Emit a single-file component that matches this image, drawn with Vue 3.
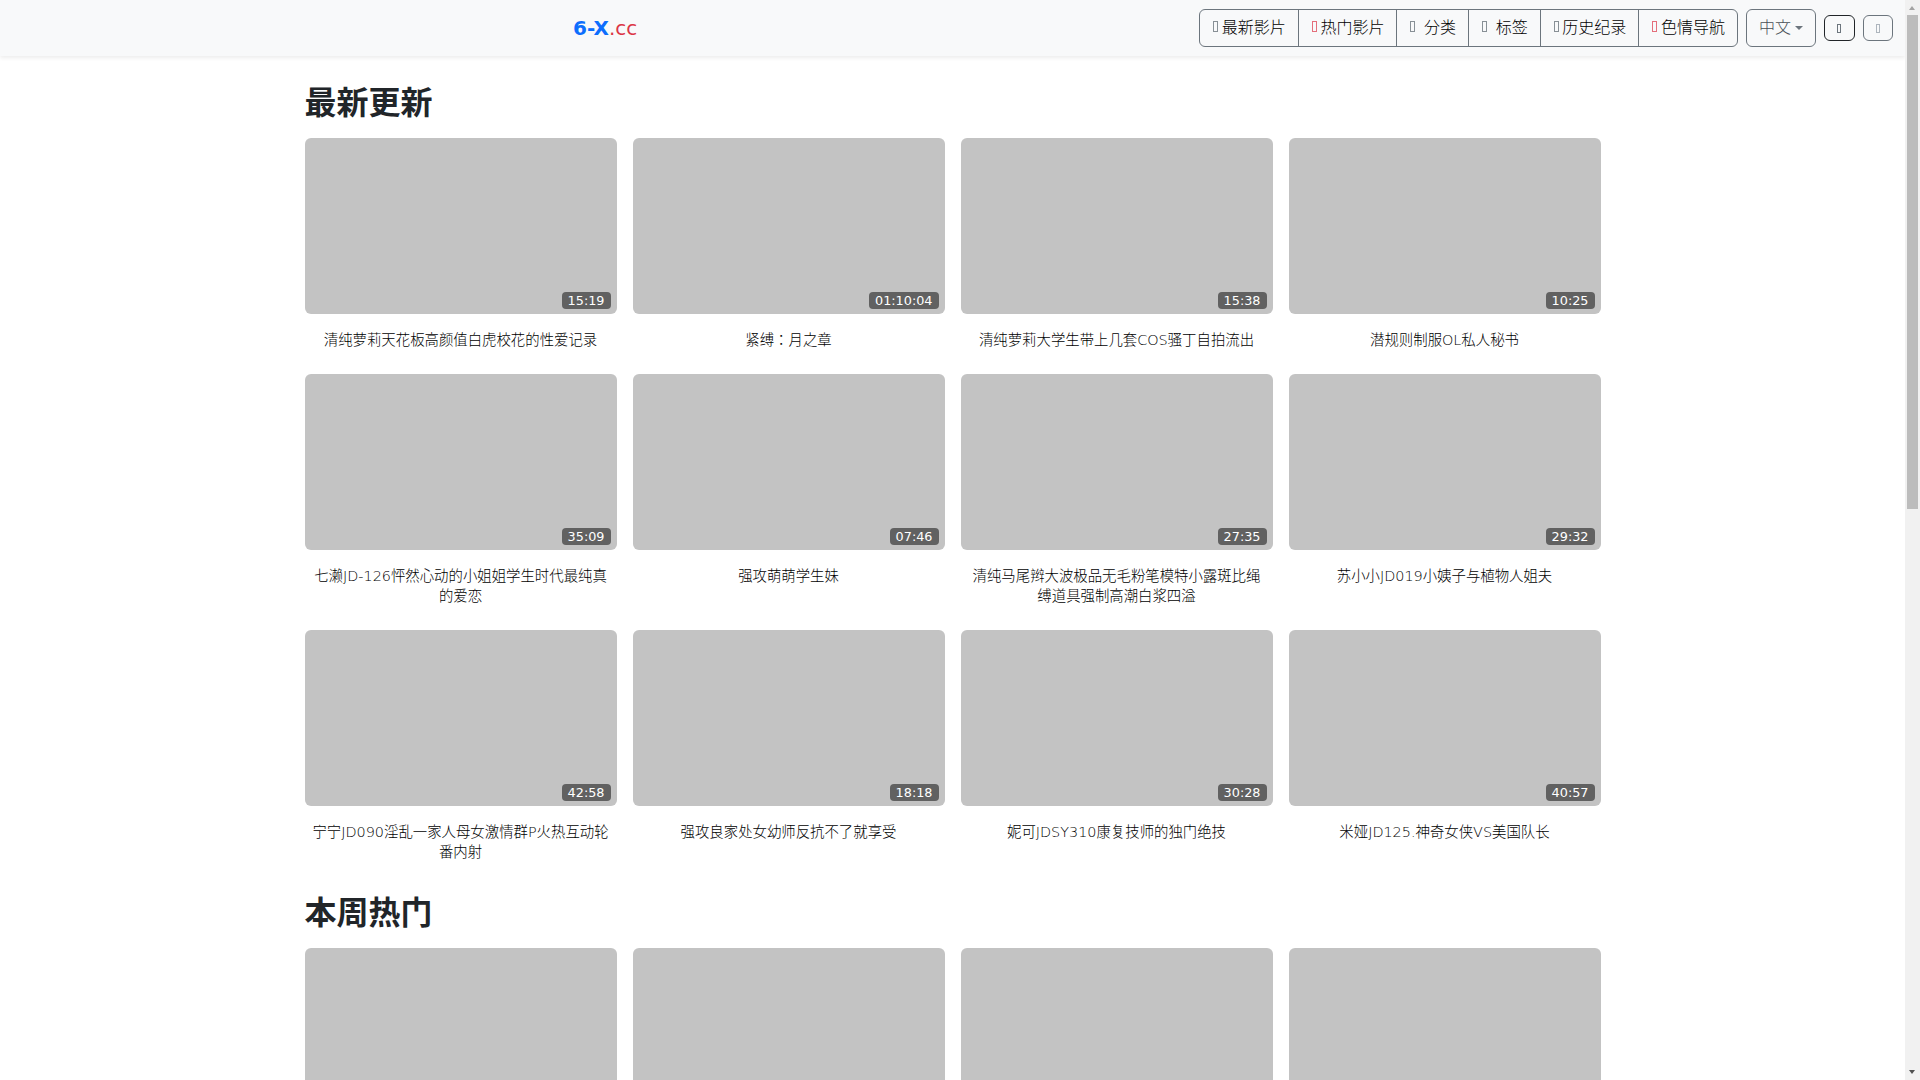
<script setup>
const navItems = [
  { label: '最新影片', hot: false },
  { label: '热门影片', hot: true },
  { label: ' 分类', hot: false },
  { label: ' 标签', hot: false },
  { label: '历史纪录', hot: false },
  { label: '色情导航', hot: true }
]
const latest = [
  ['15:19', '清纯萝莉天花板高颜值白虎校花的性爱记录'],
  ['01:10:04', '紧缚：月之章'],
  ['15:38', '清纯萝莉大学生带上几套COS骚丁自拍流出'],
  ['10:25', '潜规则制服OL私人秘书'],
  ['35:09', '七濑JD-126怦然心动的小姐姐学生时代最纯真的爱恋'],
  ['07:46', '强攻萌萌学生妹'],
  ['27:35', '清纯马尾辫大波极品无毛粉笔模特小露斑比绳缚道具强制高潮白浆四溢'],
  ['29:32', '苏小小JD019小姨子与植物人姐夫'],
  ['42:58', '宁宁JD090淫乱一家人母女激情群P火热互动轮番内射'],
  ['18:18', '强攻良家处女幼师反抗不了就享受'],
  ['30:28', '妮可JDSY310康复技师的独门绝技'],
  ['40:57', '米娅JD125.神奇女侠VS美国队长']
]
const weekly = [...latest, ...latest.slice(0, 8)]
</script>

<template>
  <div class="page">
    <nav class="navbar">
      <a class="brand"><b>6-X</b><span>.cc</span></a>
      <div class="nav-actions">
        <div class="btn-group">
          <a v-for="item in navItems" :key="item.label" class="group-btn">
            <i class="tofu" :class="{ hot: item.hot }"></i>{{ item.label }}
          </a>
        </div>
        <button class="lang">中文<span class="caret"></span></button>
        <button class="mini dark"><i class="tofu-mini"></i></button>
        <button class="mini grey"><i class="tofu-mini"></i></button>
      </div>
    </nav>
    <main class="container">
      <section class="section">
        <h2>最新更新</h2>
        <div class="grid">
          <article v-for="v in latest" :key="v[1]" class="card">
            <div class="thumb"><span class="time">{{ v[0] }}</span></div>
            <p class="title">{{ v[1] }}</p>
          </article>
        </div>
      </section>
      <section class="section">
        <h2>本周热门</h2>
        <div class="grid">
          <article v-for="(v, i) in weekly" :key="i" class="card">
            <div class="thumb"><span class="time">{{ v[0] }}</span></div>
            <p class="title">{{ v[1] }}</p>
          </article>
        </div>
      </section>
    </main>
    <div class="scrollbar" aria-hidden="true">
      <span class="arrow up"></span>
      <span class="thumb-bar"></span>
      <span class="arrow down"></span>
    </div>
  </div>
</template>

<style>
body { margin: 0; background: #fff; }
</style>

<style scoped>
.page {
  font-family: "DejaVu Sans", "Noto Sans CJK JP", sans-serif;
  font-size: 16px;
  line-height: 1.5;
  color: #212529;
  padding-right: 15px;
}
.navbar {
  height: 56px;
  box-sizing: border-box;
  display: flex;
  align-items: center;
  justify-content: space-between;
  padding: 0 12px 0 573px;
  background: #f8f9fa;
  box-shadow: 0 2px 4px rgba(0, 0, 0, 0.075);
}
.brand { font-size: 20px; line-height: 30px; }
.brand b { color: #0d6efd; }
.brand span { color: #dc3545; }
.nav-actions { display: flex; align-items: center; gap: 8px; }
.btn-group {
  display: flex;
  border: 1px solid #6c757d;
  border-radius: 6px;
}
.group-btn {
  padding: 6px 12px;
  height: 24px;
  font-weight: 300;
  color: #000;
  white-space: pre;
  border-left: 1px solid #6c757d;
}
.group-btn:first-child { border-left: 0; }
.tofu {
  display: inline-block;
  box-sizing: border-box;
  width: 5px;
  height: 11px;
  margin: 0 3.6px 0 1px;
  vertical-align: 1px;
  border: 1px solid #6c757d;
  opacity: 0.8;
}
.tofu.hot { border-color: #dc3545; opacity: 0.7; }
.lang {
  font: inherit;
  font-weight: 300;
  color: #495057;
  height: 38px;
  padding: 6px 12px;
  background: transparent;
  border: 1px solid #6c757d;
  border-radius: 6px;
  display: flex;
  align-items: center;
}
.caret {
  margin-left: 4px;
  border-top: 4px solid #6c757d;
  border-left: 4px solid transparent;
  border-right: 4px solid transparent;
}
.mini {
  font: inherit;
  width: 30.5px;
  height: 26px;
  padding: 0;
  background: transparent;
  border-radius: 6px;
  display: flex;
  align-items: center;
  justify-content: center;
}
.mini.dark { border: 1px solid #212529; color: #6c757d; }
.mini.grey { border: 1px solid #6c757d; color: #adb5bd; }
.tofu-mini {
  display: block;
  box-sizing: border-box;
  width: 4px;
  height: 9px;
  border: 1px solid currentColor;
}
.container {
  max-width: 1296px;
  margin: 0 auto;
  padding-bottom: 167px;
}
.section { padding-top: 28px; }
.section + .section { padding-top: 8px; }
h2 {
  margin: 0 0 16px;
  font-size: 32px;
  line-height: 38.4px;
  font-weight: 700;
}
.grid {
  display: grid;
  grid-template-columns: repeat(4, 1fr);
  column-gap: 16px;
  align-items: start;
}
.card { padding-bottom: 24px; }
.thumb {
  position: relative;
  aspect-ratio: 16 / 9;
  background: #c3c3c3;
  border-radius: 6px;
}
.time {
  position: absolute;
  right: 6px;
  bottom: 5px;
  padding: 0 6px;
  font-size: 12.8px;
  line-height: 17px;
  color: #fff;
  background: rgba(0, 0, 0, 0.5);
  border-radius: 4px;
}
.title {
  margin: 16px 6px 0;
  font-size: 14.4px;
  font-weight: 300;
  line-height: 20.2px;
  color: #000;
  text-align: center;
}
.scrollbar {
  position: fixed;
  top: 0;
  right: 0;
  bottom: 0;
  width: 15px;
  background: #f1f1f1;
}
.thumb-bar {
  position: absolute;
  top: 15px;
  left: 2px;
  width: 11px;
  height: 494px;
  background: #bcbcbc;
}
.arrow {
  position: absolute;
  left: 4px;
  border-left: 3.5px solid transparent;
  border-right: 3.5px solid transparent;
}
.arrow.up { top: 6px; border-bottom: 4px solid #a3a3a3; }
.arrow.down { bottom: 6px; border-top: 4px solid #505050; }
</style>
